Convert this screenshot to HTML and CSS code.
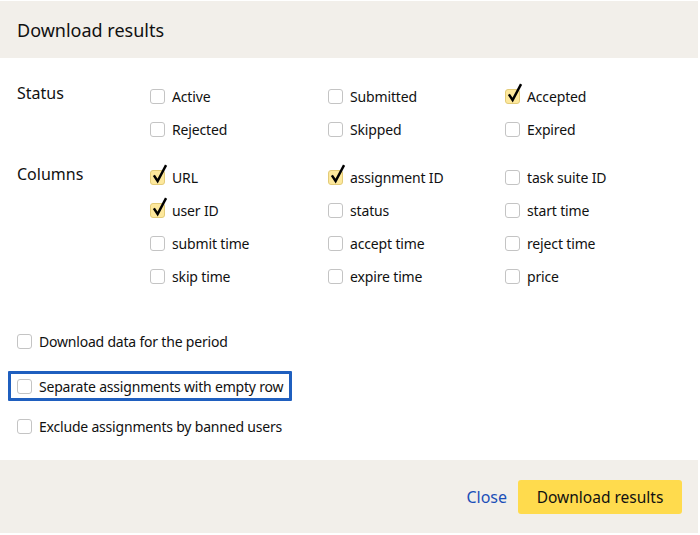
FILE: index.html
```html
<!DOCTYPE html>
<html>
<head>
<meta charset="utf-8">
<link rel="stylesheet" href="styles.css">
</head>
<body>
<div class="dialog">
  <div class="header">Download results</div>
  <div class="content">
    <div class="group">
      <div class="label">Status</div>
      <div class="options">
        <label class="opt"><span class="box"></span>Active</label>
        <label class="opt"><span class="box"></span>Submitted</label>
        <label class="opt"><span class="box checked"><svg class="tick" viewBox="0 0 16 20"><path d="M2 12 L6 18 L15 1"/></svg></span>Accepted</label>
        <label class="opt"><span class="box"></span>Rejected</label>
        <label class="opt"><span class="box"></span>Skipped</label>
        <label class="opt"><span class="box"></span>Expired</label>
      </div>
    </div>
    <div class="group">
      <div class="label">Columns</div>
      <div class="options">
        <label class="opt"><span class="box checked"><svg class="tick" viewBox="0 0 16 20"><path d="M2 12 L6 18 L15 1"/></svg></span>URL</label>
        <label class="opt"><span class="box checked"><svg class="tick" viewBox="0 0 16 20"><path d="M2 12 L6 18 L15 1"/></svg></span>assignment ID</label>
        <label class="opt"><span class="box"></span>task suite ID</label>
        <label class="opt"><span class="box checked"><svg class="tick" viewBox="0 0 16 20"><path d="M2 12 L6 18 L15 1"/></svg></span>user ID</label>
        <label class="opt"><span class="box"></span>status</label>
        <label class="opt"><span class="box"></span>start time</label>
        <label class="opt"><span class="box"></span>submit time</label>
        <label class="opt"><span class="box"></span>accept time</label>
        <label class="opt"><span class="box"></span>reject time</label>
        <label class="opt"><span class="box"></span>skip time</label>
        <label class="opt"><span class="box"></span>expire time</label>
        <label class="opt"><span class="box"></span>price</label>
      </div>
    </div>
    <div class="extras">
      <label class="extra"><span class="box"></span>Download data for the period</label>
      <label class="extra focused"><span class="box"></span>Separate assignments with empty row</label>
      <label class="extra last"><span class="box"></span>Exclude assignments by banned users</label>
    </div>
  </div>
  <div class="footer">
    <a class="close">Close</a>
    <button class="primary">Download results</button>
  </div>
</div>
</body>
</html>
```
FILE: styles.css
```css
html, body {
  margin: 0;
  padding: 0;
  background: #fff;
}
body {
  font-family: "Noto Sans", "Open Sans", sans-serif;
  color: #111;
  font-size: 14px;
}
.dialog {
  width: 698px;
  padding-top: 1px;
}
.header {
  height: 57px;
  background: #f2efea;
  padding-left: 17px;
  display: flex;
  align-items: center;
  font-size: 18px;
  color: #111;
}
.content {
  padding: 22px 0 19px 0;
}
.group {
  display: flex;
  margin-bottom: 15px;
}
.label {
  width: 133px;
  padding-left: 17px;
  font-size: 16px;
  line-height: 30px;
  margin-top: -2px;
}
.options {
  display: grid;
  grid-template-columns: 178px 177px 180px;
}
.opt {
  height: 33px;
  display: flex;
  align-items: center;
  font-size: 14px;
  letter-spacing: -0.15px;
}
.box {
  position: relative;
  width: 15px;
  height: 15px;
  box-sizing: border-box;
  border: 1px solid #c4c4c4;
  border-radius: 3px;
  background: #fff;
  margin-right: 7px;
  flex: none;
}
.box.checked {
  background: #fde89c;
  border-color: #e3cb78;
}
.tick {
  position: absolute;
  left: 1px;
  top: -7px;
  width: 15px;
  height: 19px;
  overflow: visible;
}
.tick path {
  fill: none;
  stroke: #000;
  stroke-width: 2.6;
  stroke-linejoin: miter;
}
.extras {
  display: flex;
  flex-direction: column;
  align-items: flex-start;
  padding-top: 18px;
}
.extra {
  height: 30px;
  display: flex;
  align-items: center;
  padding-left: 17px;
  font-size: 14px;
  letter-spacing: -0.2px;
}
.extra.focused {
  margin-top: 15px;
  margin-left: 8px;
  padding-left: 6px;
  padding-right: 6px;
  box-sizing: border-box;
  border: 3px solid #1f5fbf;
  border-radius: 1px;
}
.extra.last {
  margin-top: 10px;
}
.footer {
  background: #f2efea;
  height: 73px;
  display: flex;
  justify-content: flex-end;
  align-items: center;
  padding-right: 16px;
  gap: 11px;
}
.close {
  color: #1b4fb8;
  font-size: 16px;
  text-decoration: none;
}
.primary {
  font-family: "Noto Sans", "Open Sans", sans-serif;
  font-size: 15.5px;
  color: #111;
  background: #ffdb4d;
  border: none;
  border-radius: 3px;
  height: 34px;
  width: 164px;
  padding: 0;
}
```
